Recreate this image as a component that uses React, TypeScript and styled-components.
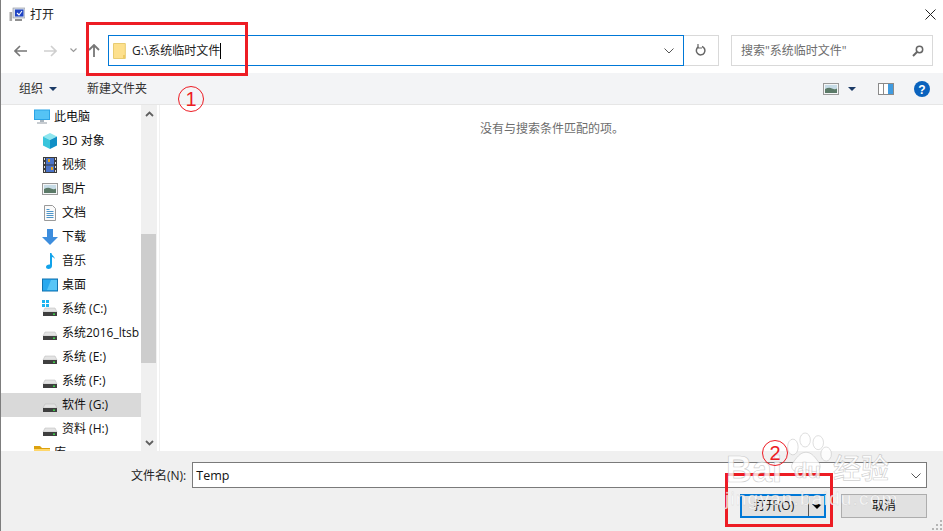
import React from "react";
import styled, { createGlobalStyle } from "styled-components";

const Global = createGlobalStyle`
  html, body { margin: 0; padding: 0; background: #fff; }
  #root { width: 943px; height: 531px; overflow: hidden; }
  * { box-sizing: border-box; }
`;

const Dialog = styled.div`
  position: relative;
  width: 943px;
  height: 531px;
  display: flex;
  flex-direction: column;
  overflow: hidden;
  background: #fff;
  border-left: 1px solid #7d7d7d;
  font: 12px/16px "Open Sans", "Noto Sans CJK SC", sans-serif;
  color: #1a1a1a;
`;
const EdgeTint = styled.div`
  position: absolute;
  left: -1px;
  top: 385px;
  bottom: 0;
  width: 1px;
  background: #58683a;
`;
const TitleBar = styled.div`
  height: 29px;
  flex: none;
  display: flex;
  align-items: center;
  padding-left: 8px;
  gap: 5px;
  color: #222;
`;
const TitleText = styled.span`
  flex: 1;
`;
const CloseBtn = styled.div`
  width: 22px;
  height: 29px;
  display: flex;
  align-items: center;
  justify-content: center;
  margin-right: 2px;
`;
const NavBar = styled.div`
  height: 44px;
  flex: none;
  display: flex;
  align-items: center;
  padding: 0 0 1px 13px;
`;
const NavIcon = styled.div<{ $w: number }>`
  width: ${(p) => p.$w}px;
  height: 16px;
  display: flex;
  align-items: center;
  flex: none;
`;
const Address = styled.div`
  width: 576px;
  height: 31px;
  margin-left: 7px;
  display: flex;
  align-items: center;
  border: 1px solid #0078d7;
  padding: 0 9px 0 4px;
  font-size: 12px;
  color: #222;
`;
const AddressText = styled.span`
  flex: 1;
  margin-left: 6px;
  display: flex;
  align-items: center;
`;
const Caret = styled.span`
  width: 1px;
  height: 16px;
  background: #000;
`;
const Refresh = styled.div`
  width: 35px;
  height: 31px;
  border: 1px solid #d9d9d9;
  border-left: none;
  display: flex;
  align-items: center;
  justify-content: center;
`;
const Search = styled.div`
  width: 202px;
  height: 31px;
  margin-left: 12px;
  border: 1px solid #d9d9d9;
  display: flex;
  align-items: center;
  justify-content: space-between;
  padding: 0 8px 0 9px;
  color: #6d6d6d;
`;
const ToolBar = styled.div`
  height: 32px;
  flex: none;
  display: flex;
  align-items: center;
  background: #f3f4f6;
  border-bottom: 1px solid #e6e6e6;
  padding: 0 13px 0 18px;
  color: #333;
`;
const ToolLabel = styled.span`
  display: flex;
  align-items: center;
  gap: 6px;
  margin-right: 30px;
`;
const ToolSpacer = styled.div`
  flex: 1;
`;
const ToolIcon = styled.div<{ $gap: number }>`
  display: flex;
  align-items: center;
  margin-left: ${(p) => p.$gap}px;
`;
const Body = styled.div`
  flex: 1;
  min-height: 0;
  display: flex;
  overflow: hidden;
`;
const Tree = styled.div`
  width: 140px;
  flex: none;
  overflow: hidden;
`;
const Row = styled.div<{ $depth?: number; $sel?: boolean }>`
  height: 24px;
  display: flex;
  align-items: center;
  white-space: nowrap;
  gap: 4px;
  padding-left: ${(p) => (p.$depth ? 41 : 33)}px;
  background: ${(p) => (p.$sel ? "#d9d9d9" : "transparent")};
  color: #111;
`;
const RowIcon = styled.span`
  width: 16px;
  height: 16px;
  flex: none;
  display: flex;
  align-items: center;
  justify-content: center;
`;
const Scrollbar = styled.div`
  width: 16px;
  flex: none;
  background: #f0f0f0;
  display: flex;
  flex-direction: column;
`;
const ScrollArrow = styled.div`
  height: 17px;
  flex: none;
  display: flex;
  align-items: center;
  justify-content: center;
`;
const Track = styled.div`
  flex: 1;
  display: flex;
  flex-direction: column;
  padding-top: 112px;
  padding-bottom: 71px;
`;
const Thumb = styled.div`
  flex: 1;
  width: 15px;
  background: #cdcdcd;
`;
const Results = styled.div`
  flex: 1;
  border-left: 1px solid #f0f0f0;
  margin-left: 2px;
  text-align: center;
  padding: 16px 0 0 1px;
  color: #6d6d6d;
`;
const Footer = styled.div`
  height: 80px;
  flex: none;
  background: #f0f0f0;
  display: flex;
  flex-direction: column;
  padding: 11px 16px 0 130px;
`;
const NameRow = styled.div`
  display: flex;
  align-items: center;
  gap: 6px;
  color: #222;
`;
const NameLabel = styled.span`
  padding-top: 2px;
`;
const NameInput = styled.div`
  flex: 1;
  height: 26px;
  background: #fff;
  border: 1px solid #7a7a7a;
  display: flex;
  align-items: center;
  justify-content: space-between;
  padding: 2px 5px 0 3px;
  font-size: 12.5px;
  color: #111;
`;
const ButtonRow = styled.div`
  display: flex;
  justify-content: flex-end;
  gap: 15px;
  margin-top: 6px;
`;
const OpenBtn = styled.div`
  width: 86px;
  height: 24px;
  background: #e1e1e1;
  border: 2px solid #0078d7;
  display: flex;
  align-items: center;
`;
const OpenLabel = styled.span`
  flex: 1;
  text-align: center;
  color: #111;
  padding-right: 2px;
`;
const SplitArrow = styled.span`
  width: 16px;
  height: 20px;
  border-left: 1px solid #555;
  display: flex;
  align-items: center;
  justify-content: center;
`;
const CancelBtn = styled.div`
  width: 86px;
  height: 24px;
  background: #e1e1e1;
  border: 1px solid #adadad;
  display: flex;
  align-items: center;
  justify-content: center;
  color: #111;
`;
const Grip = styled.svg`
  position: absolute;
  right: 1px;
  bottom: 1px;
`;
const RedBox = styled.div<{ $l: number; $t: number; $w: number; $h: number }>`
  position: absolute;
  left: ${(p) => p.$l}px;
  top: ${(p) => p.$t}px;
  width: ${(p) => p.$w}px;
  height: ${(p) => p.$h}px;
  border: 3px solid #ed1c24;
  pointer-events: none;
`;
const Mark = styled.div<{ $l: number; $t: number }>`
  position: absolute;
  left: ${(p) => p.$l}px;
  top: ${(p) => p.$t}px;
  width: 26px;
  height: 26px;
  border: 1.5px solid #ed1c24;
  border-radius: 50%;
  display: flex;
  align-items: center;
  justify-content: center;
  color: #ed1c24;
  font: 20px/24px "Liberation Sans", sans-serif;
`;
const Watermark = styled.div`
  position: absolute;
  left: 722px;
  top: 432px;
  width: 220px;
  height: 96px;
  color: rgba(255, 255, 255, 0.8);
  -webkit-text-stroke: 0.7px rgba(175, 175, 175, 0.6);
  pointer-events: none;
  white-space: nowrap;
`;
const WmBai = styled.span`
  position: absolute;
  left: 3px;
  top: 18px;
  font: 700 36px/40px "Liberation Sans", sans-serif;
`;
const WmDu = styled.span`
  position: absolute;
  left: 71px;
  top: 27px;
  font: 700 22px/24px "Liberation Sans", sans-serif;
`;
const WmJy = styled.span`
  position: absolute;
  left: 110px;
  top: 17px;
  font: 500 28px/36px "Noto Sans CJK SC", sans-serif;
`;
const WmUrl = styled.span`
  position: absolute;
  left: 2px;
  top: 56px;
  font: 400 19px/22px "Liberation Sans", sans-serif;
  letter-spacing: 1.2px;
  -webkit-text-stroke: 0.3px rgba(175, 175, 175, 0.5);
`;
const WmPaw = styled.svg`
  position: absolute;
  left: 55px;
  top: -2px;
`;

const Drive = () => (
  <svg width="16" height="16" viewBox="0 0 16 16">
    <path d="M3 7 L13 7 L15 11 L1 11Z" fill="#e3e3e3" stroke="#b5b5b5" strokeWidth=".5" />
    <rect x="1" y="11" width="14" height="4" fill="#3f3f3f" />
    <rect x="11" y="12.5" width="2" height="1.4" fill="#3ddc4a" />
  </svg>
);
const WinDrive = () => (
  <svg width="16" height="18" viewBox="0 0 16 18">
    <path d="M0 0h3v3H0zM4 0h3v3H4zM0 4h3v3H0zM4 4h3v3H4z" fill="#1cb4f0" />
    <path d="M3 8 L13 8 L15 12 L1 12Z" fill="#e3e3e3" stroke="#b5b5b5" strokeWidth=".5" />
    <rect x="1" y="12" width="14" height="4" fill="#3f3f3f" />
    <rect x="11" y="13.5" width="2" height="1.4" fill="#3ddc4a" />
  </svg>
);
const Pc = () => (
  <svg width="16" height="16" viewBox="0 0 16 16">
    <rect x="0" y="0.5" width="16" height="10.5" fill="#2aa3e6" />
    <path d="M1 1.5h14v8.5H1z" fill="#55c3f5" />
    <path d="M6 11h4v2H6z" fill="#a9b4bd" />
    <path d="M3 13.5h10v1H3z" fill="#8e99a3" />
  </svg>
);
const Cube = () => (
  <svg width="16" height="16" viewBox="0 0 16 16">
    <path d="M8 0 15 3.5 8 7 1 3.5Z" fill="#8fe6ef" />
    <path d="M1 3.5 8 7v9l-7-3.5Z" fill="#39c5dc" />
    <path d="M15 3.5 8 7v9l7-3.5Z" fill="#0f8fc6" />
  </svg>
);
const Film = () => (
  <svg width="16" height="16" viewBox="0 0 16 16">
    <rect x="1" y="0" width="14" height="16" fill="#3c3c3c" />
    <rect x="4" y="1" width="8" height="6.5" fill="#4a73c8" />
    <rect x="4" y="8.5" width="8" height="6.5" fill="#4a73c8" />
    <path d="M6 2h2v3H6zM9 10h2v3H9z" fill="#e3a21a" />
    <path d="M2 1h1v2H2zM2 5h1v2H2zM2 9h1v2H2zM2 13h1v2H2zM13 1h1v2h-1zM13 5h1v2h-1zM13 9h1v2h-1zM13 13h1v2h-1z" fill="#ddd" />
  </svg>
);
const Pic = () => (
  <svg width="16" height="16" viewBox="0 0 16 16">
    <rect x=".5" y="2.5" width="15" height="11" fill="#f4f6f7" stroke="#9a9a9a" />
    <rect x="2" y="4" width="12" height="4" fill="#c6dbe6" />
    <path d="M2 8q4-2 7-.5t5 0V12H2z" fill="#5b7a68" />
  </svg>
);
const Doc = () => (
  <svg width="16" height="16" viewBox="0 0 16 16">
    <path d="M2.5.5h8l3 3v12h-11z" fill="#fafafa" stroke="#9a9a9a" />
    <path d="M4.5 4h3v1h-3zM4.5 6h7v1h-7zM4.5 8h7v1h-7zM4.5 10h7v1h-7zM4.5 12h7v1h-7z" fill="#4d95c9" />
  </svg>
);
const Down = () => (
  <svg width="16" height="16" viewBox="0 0 16 16">
    <path d="M5 0h6v8h5l-8 8-8-8h5z" fill="#3d8ddd" />
  </svg>
);
const Music = () => (
  <svg width="16" height="16" viewBox="0 0 16 16">
    <path d="M8 0h1.5c.3 2.6 3 3 3.5 6-1-1.2-2-1.8-3-2v9c0 2-1.8 3-3.5 3C5 16 4 15.2 4 14c0-1.6 2-2.8 4-2.4z" fill="#12a3ea" />
  </svg>
);
const Desk = () => (
  <svg width="16" height="16" viewBox="0 0 16 16">
    <rect x=".5" y="2" width="15" height="12" fill="#29a9ef" stroke="#1173b0" />
    <path d="M9 3h6v10H5z" fill="#57c5f7" />
  </svg>
);
const Folder = ({ c = "#ffd76b" }: { c?: string }) => (
  <svg width="16" height="14" viewBox="0 0 16 14">
    <path d="M0 0h6l2 2h8v2H0z" fill="#dca10e" />
    <rect x="0" y="3" width="16" height="11" fill={c} />
  </svg>
);

const items: { icon: React.ReactNode; label: string; depth?: number; sel?: boolean }[] = [
  { icon: <Pc />, label: "此电脑" },
  { icon: <Cube />, label: "3D 对象", depth: 1 },
  { icon: <Film />, label: "视频", depth: 1 },
  { icon: <Pic />, label: "图片", depth: 1 },
  { icon: <Doc />, label: "文档", depth: 1 },
  { icon: <Down />, label: "下载", depth: 1 },
  { icon: <Music />, label: "音乐", depth: 1 },
  { icon: <Desk />, label: "桌面", depth: 1 },
  { icon: <WinDrive />, label: "系统 (C:)", depth: 1 },
  { icon: <Drive />, label: "系统2016_ltsb", depth: 1 },
  { icon: <Drive />, label: "系统 (E:)", depth: 1 },
  { icon: <Drive />, label: "系统 (F:)", depth: 1 },
  { icon: <Drive />, label: "软件 (G:)", depth: 1, sel: true },
  { icon: <Drive />, label: "资料 (H:)", depth: 1 },
  { icon: <Folder />, label: "库" },
];

const Chev = ({ up, color = "#606060" }: { up?: boolean; color?: string }) => (
  <svg width="9" height="6" viewBox="0 0 9 6">
    <path d={up ? "M1 5l3.5-3.5L8 5" : "M1 1l3.5 3.5L8 1"} fill="none" stroke={color} strokeWidth="1.8" />
  </svg>
);
const Tri = ({ c = "#1b3a66", w = 8 }: { c?: string; w?: number }) => (
  <svg width={w} height={w / 2} viewBox="0 0 8 4">
    <path d="M0 0h8L4 4z" fill={c} />
  </svg>
);

export default function App() {
  return (
    <Dialog>
      <Global />
      <EdgeTint />
      <TitleBar>
        <svg width="16" height="16" viewBox="0 0 16 16">
          <rect x="4" y="1" width="12" height="10" fill="#d5dce8" stroke="#8a8f99" strokeWidth=".6" />
          <rect x="6" y="2.5" width="8.5" height="7" fill="#1f44c4" />
          <path d="M8 6l2 2 3-4" stroke="#fff" fill="none" strokeWidth="1.1" />
          <rect x="0.5" y="5" width="2.6" height="9" fill="#a8a8a8" />
          <rect x="6" y="12" width="7" height="2" fill="#8f8f8f" />
        </svg>
        <TitleText>打开</TitleText>
        <CloseBtn>
          <svg width="11" height="11" viewBox="0 0 11 11">
            <path d="M.5.5l10 10M10.5.5l-10 10" stroke="#222" strokeWidth="1" />
          </svg>
        </CloseBtn>
      </TitleBar>
      <NavBar>
        <NavIcon $w={30}>
          <svg width="13" height="12" viewBox="0 0 13 12">
            <path d="M6 1L1 6l5 5M1 6h12" stroke="#777" strokeWidth="1.6" fill="none" />
          </svg>
        </NavIcon>
        <NavIcon $w={26}>
          <svg width="13" height="12" viewBox="0 0 13 12">
            <path d="M7 1l5 5-5 5M12 6H0" stroke="#cfcfcf" strokeWidth="1.6" fill="none" />
          </svg>
        </NavIcon>
        <NavIcon $w={18}>
          <svg width="7" height="5" viewBox="0 0 7 5">
            <path d="M.5.5l3 3 3-3" stroke="#9a9a9a" strokeWidth="1.2" fill="none" />
          </svg>
        </NavIcon>
        <NavIcon $w={13}>
          <svg width="12" height="13" viewBox="0 0 12 13">
            <path d="M1 6l5-5 5 5M6 1v12" stroke="#777" strokeWidth="1.8" fill="none" />
          </svg>
        </NavIcon>
        <Address>
          <svg width="13" height="16" viewBox="0 0 13 16">
            <path d="M.5.5h11.8v15H.5z" fill="#fde08d" stroke="#e8cc72" />
            <path d="M10 12h2v3h-2z" fill="#efca63" />
          </svg>
          <AddressText>
            G:\系统临时文件
            <Caret />
          </AddressText>
          <svg width="10" height="6" viewBox="0 0 10 6">
            <path d="M.5.5L5 5 9.5.5" stroke="#555" strokeWidth="1" fill="none" />
          </svg>
        </Address>
        <Refresh>
          <svg width="12" height="13" viewBox="0 0 12 13">
            <path d="M7 2.5a4.3 4.3 0 1 1-3.6.4" fill="none" stroke="#666" strokeWidth="1.5" />
            <path d="M3 0v4h4" fill="none" stroke="#666" strokeWidth="1.2" />
          </svg>
        </Refresh>
        <Search>
          <span>搜索"系统临时文件"</span>
          <svg width="12" height="12" viewBox="0 0 12 12">
            <circle cx="7.5" cy="4.5" r="3.2" fill="none" stroke="#666" strokeWidth="1.5" />
            <path d="M5 7l-4 4" stroke="#666" strokeWidth="2" />
          </svg>
        </Search>
      </NavBar>
      <ToolBar>
        <ToolLabel>
          组织
          <Tri />
        </ToolLabel>
        <ToolLabel>新建文件夹</ToolLabel>
        <ToolSpacer />
        <ToolIcon $gap={0}>
          <Pic />
        </ToolIcon>
        <ToolIcon $gap={9}>
          <Tri />
        </ToolIcon>
        <ToolIcon $gap={22}>
          <svg width="16" height="12" viewBox="0 0 16 12">
            <rect x=".5" y=".5" width="15" height="11" fill="#fff" stroke="#8a8a8a" />
            <rect x="10" y="1" width="5" height="10" fill="#3f9be0" />
            <rect x="5" y="1" width="1" height="10" fill="#8a8a8a" />
          </svg>
        </ToolIcon>
        <ToolIcon $gap={20}>
          <svg width="16" height="16" viewBox="0 0 16 16">
            <circle cx="8" cy="8" r="8" fill="#0a62bd" />
            <text x="8" y="12.5" fontSize="12" fontWeight="700" textAnchor="middle" fill="#fff" fontFamily="Liberation Sans">?</text>
          </svg>
        </ToolIcon>
      </ToolBar>
      <Body>
        <Tree>
          {items.map((it) => (
            <Row key={it.label} $depth={it.depth} $sel={it.sel}>
              <RowIcon>{it.icon}</RowIcon>
              {it.label}
            </Row>
          ))}
        </Tree>
        <Scrollbar>
          <ScrollArrow>
            <Chev up />
          </ScrollArrow>
          <Track>
            <Thumb />
          </Track>
          <ScrollArrow>
            <Chev />
          </ScrollArrow>
        </Scrollbar>
        <Results>没有与搜索条件匹配的项。</Results>
      </Body>
      <Footer>
        <NameRow>
          <NameLabel>文件名(N):</NameLabel>
          <NameInput>
            Temp
            <svg width="10" height="6" viewBox="0 0 10 6">
              <path d="M.5.5L5 5 9.5.5" stroke="#555" strokeWidth="1" fill="none" />
            </svg>
          </NameInput>
        </NameRow>
        <ButtonRow>
          <OpenBtn>
            <OpenLabel>打开(O)</OpenLabel>
            <SplitArrow>
              <Tri c="#000" w={10} />
            </SplitArrow>
          </OpenBtn>
          <CancelBtn>取消</CancelBtn>
        </ButtonRow>
      </Footer>
      <Grip width="10" height="10" viewBox="0 0 10 10">
        <path d="M8 0h2v2H8zM4 4h2v2H4zM8 4h2v2H8zM0 8h2v2H0zM4 8h2v2H4zM8 8h2v2H8z" fill="#b5b5b5" />
      </Grip>
      <RedBox $l={85} $t={22} $w={162} $h={54} />
      <Mark $l={177} $t={86}>1</Mark>
      <RedBox $l={724} $t={473} $w={108} $h={54} />
      <Watermark>
        <WmPaw width="56" height="48" viewBox="0 0 64 48" fill="rgba(255,255,255,.8)" stroke="rgba(175,175,175,.6)" strokeWidth="0.8">
          <ellipse cx="17" cy="16" rx="6" ry="9" />
          <ellipse cx="31" cy="8" rx="6" ry="8" />
          <ellipse cx="46" cy="11" rx="6" ry="8" />
          <ellipse cx="55" cy="24" rx="6" ry="8" />
          <path d="M32 22c7 0 11 7 15 12 3 5 0 11-6 10-4 0-6-2-9-2s-6 2-10 2c-6 0-8-6-5-10 4-5 8-12 15-12z" />
        </WmPaw>
        <WmBai>Bai</WmBai>
        <WmDu>du</WmDu>
        <WmJy>经验</WmJy>
        <WmUrl>jingyan.baidu.com</WmUrl>
      </Watermark>
      <Mark $l={761} $t={440}>2</Mark>
    </Dialog>
  );
}
